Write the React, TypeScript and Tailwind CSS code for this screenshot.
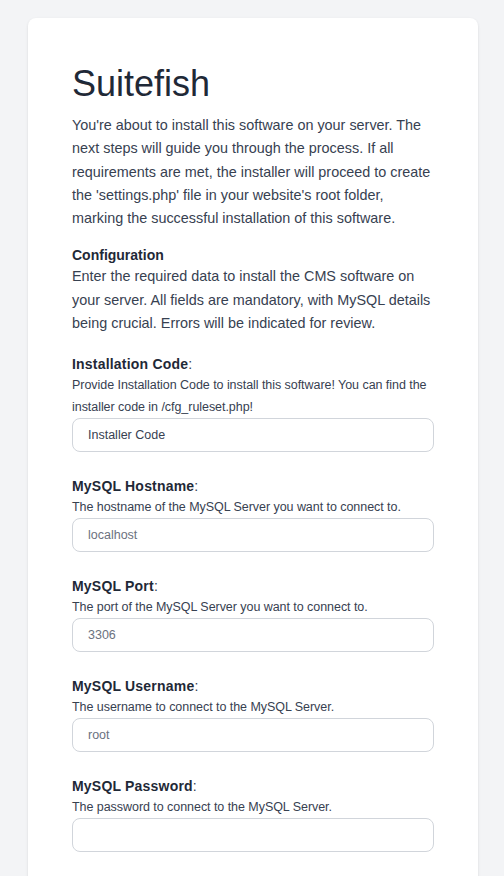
const fields = [
  {
    label: "Installation Code",
    help: ["Provide Installation Code to install this software! You can find the", "installer code in /cfg_ruleset.php!"],
    placeholder: "Installer Code",
    value: "",
  },
  {
    label: "MySQL Hostname",
    help: ["The hostname of the MySQL Server you want to connect to."],
    placeholder: "",
    value: "localhost",
  },
  {
    label: "MySQL Port",
    help: ["The port of the MySQL Server you want to connect to."],
    placeholder: "",
    value: "3306",
  },
  {
    label: "MySQL Username",
    help: ["The username to connect to the MySQL Server."],
    placeholder: "",
    value: "root",
  },
  {
    label: "MySQL Password",
    help: ["The password to connect to the MySQL Server."],
    placeholder: "",
    value: "",
  },
];

const App = () => {
  return (
    <div
      className="min-h-screen bg-[#f3f4f6] pl-[28px] pt-[18px]"
      style={{ fontFamily: '"Liberation Sans", Arial, sans-serif' }}
    >
      <div className="w-[450px] bg-white rounded-lg shadow-sm px-[44px] pt-[46px] pb-10">
        <h1 className="text-[36px] leading-[40px] text-[#1f2937]">Suitefish</h1>
        <p className="mt-[10px] text-[14.4px] leading-[23.3px] text-[#374151]">
          You're about to install this software on your server. The next steps
          will guide you through the process. If all requirements are met, the
          installer will proceed to create the 'settings.php' file in your
          website's root folder, marking the successful installation of this
          software.
        </p>

        <div className="mt-[15px] text-[14.4px] leading-[23.3px] text-[#374151]">
          <div className="font-bold text-[14px] leading-[20px] text-[#1f2937]">
            Configuration
          </div>
          <p>
            Enter the required data to install the CMS software on your server.
            All fields are mandatory, with MySQL details being crucial. Errors
            will be indicated for review.
          </p>
        </div>

        <form className="mt-[19px] flex flex-col gap-[24px]">
          {fields.map((f) => (
            <div key={f.label}>
              <label className="block text-[14px] leading-[20px] text-[#374151]">
                <span className="font-bold tracking-[0.2px] text-[#1f2937]">{f.label}</span>:
              </label>
              <p className="text-[12.5px] leading-[22px] text-[#374151]">
                {f.help.map((line) => (
                  <span key={line} className="block whitespace-nowrap tracking-[-0.05px]">
                    {line}
                  </span>
                ))}
              </p>
              <input
                type="text"
                readOnly
                defaultValue={f.value}
                placeholder={f.placeholder}
                className="block w-full h-[34px] rounded-lg border border-[#d1d5db] px-[15px] text-[12.5px] text-[#6b7280] placeholder:text-[#374151] outline-none"
              />
            </div>
          ))}
        </form>
      </div>
    </div>
  );
};

export default App;
